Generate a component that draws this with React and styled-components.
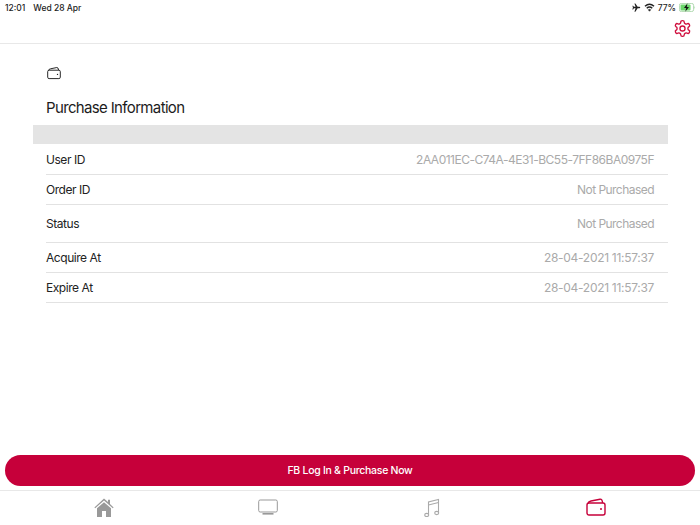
import React from 'react';
import styled, { createGlobalStyle } from 'styled-components';

const Global = createGlobalStyle`
  html, body { margin: 0; padding: 0; background: #fff; }
  body { font-family: Inter, "Liberation Sans", sans-serif; }
`;

const Page = styled.div`
  width: 700px;
  height: 525px;
  display: flex;
  flex-direction: column;
  overflow: hidden;
  background: #fff;
`;

const StatusBar = styled.div`
  height: 14px;
  padding: 1px 4px 0 5px;
  box-sizing: border-box;
  display: flex;
  align-items: center;
  justify-content: space-between;
  font-size: 8.5px;
  font-weight: 500;
  color: #222;
`;

const StatusGroup = styled.div`
  display: flex;
  align-items: center;
  gap: ${p => p.$gap || 4}px;
`;

const Header = styled.div`
  height: 24px;
  padding: 5px 8px 0;
  display: flex;
  justify-content: flex-end;
  align-items: flex-start;
  border-bottom: 1px solid #e8e8e8;
`;

const Content = styled.div`
  flex: 1;
  padding: 20px 32px 0 33px;
  display: flex;
  flex-direction: column;
`;

const WalletSlot = styled.div`
  height: 14px;
  padding-left: 14px;
  color: #222;
`;

const Title = styled.h1`
  margin: 19px 0 0 13px;
  height: 28px;
  font-size: 15px;
  line-height: 22px;
  font-weight: 400;
  letter-spacing: -0.65px;
  color: #1c1c1c;
`;

const GreyBar = styled.div`
  height: 19px;
  background: #e4e4e4;
`;

const Rows = styled.div`
  margin-left: 13px;
`;

const Row = styled.div`
  box-sizing: border-box;
  height: ${p => p.$h}px;
  padding: 0 14px 0 0;
  display: flex;
  align-items: center;
  justify-content: space-between;
  border-bottom: 1px solid #e2e2e2;
  font-size: 12px;
`;

const Label = styled.span`
  color: #222;
  letter-spacing: -0.45px;
`;

const Value = styled.span`
  color: #aaa;
  letter-spacing: ${p => p.$spacing}px;
`;

const BuyButton = styled.button`
  display: block;
  margin: 0 5px 4px;
  width: 690px;
  height: 31px;
  padding: 0;
  border: 0;
  border-radius: 16px;
  background: #c6003a;
  color: #fff;
  font-family: inherit;
  font-size: 10.5px;
  font-weight: 500;
  letter-spacing: -0.28px;
`;

const TabBar = styled.div`
  height: 34px;
  border-top: 1px solid #e8e8e8;
  display: grid;
  grid-template-columns: repeat(4, 164px);
  padding-left: 22px;
`;

const Tab = styled.div`
  display: flex;
  justify-content: center;
  padding-top: 6px;
  color: ${p => (p.$active ? '#c6003a' : '#999')};
`;

const Wallet = ({ size = 14 }) => (
  <svg width={size} height={size} viewBox="0 0 20 20" fill="none" stroke="currentColor" strokeWidth="1.4">
    <rect x="1" y="6" width="18" height="12" rx="2" />
    <path d="M2 6.5 Q2.5 4.5 5 4 L14 2.2 Q16.2 1.8 16.6 6" />
    <circle cx="15" cy="12" r="1" fill="currentColor" stroke="none" />
  </svg>
);

const Gear = () => (
  <svg width="19" height="19" viewBox="0 0 24 24" fill="none" stroke="#d0103f" strokeWidth="1.7" strokeLinejoin="round">
    <path d="M12.22 2h-.44a2 2 0 0 0-2 2v.18a2 2 0 0 1-1 1.73l-.43.25a2 2 0 0 1-2 0l-.15-.08a2 2 0 0 0-2.73.73l-.22.38a2 2 0 0 0 .73 2.73l.15.1a2 2 0 0 1 1 1.72v.51a2 2 0 0 1-1 1.74l-.15.09a2 2 0 0 0-.73 2.73l.22.38a2 2 0 0 0 2.73.73l.15-.08a2 2 0 0 1 2 0l.43.25a2 2 0 0 1 1 1.73V20a2 2 0 0 0 2 2h.44a2 2 0 0 0 2-2v-.18a2 2 0 0 1 1-1.73l.43-.25a2 2 0 0 1 2 0l.15.08a2 2 0 0 0 2.73-.73l.22-.39a2 2 0 0 0-.73-2.73l-.15-.08a2 2 0 0 1-1-1.74v-.5a2 2 0 0 1 1-1.74l.15-.09a2 2 0 0 0 .73-2.73l-.22-.38a2 2 0 0 0-2.73-.73l-.15.08a2 2 0 0 1-2 0l-.43-.25a2 2 0 0 1-1-1.73V4a2 2 0 0 0-2-2z" />
    <circle cx="12" cy="12" r="3.2" />
  </svg>
);

const Home = () => (
  <svg width="20" height="20" viewBox="0 0 20 20" fill="currentColor">
    <path d="M10 1.5 L14 5 V2.8 H16 V7 L19.6 10.4 L18.8 11.3 L10 3.5 L1.2 11.3 L0.4 10.4 Z" />
    <path d="M10 5.2 L17 11.2 V20 H12 V14 H8 V20 H3 V11.2 Z" />
  </svg>
);

const Tv = () => (
  <svg width="20" height="20" viewBox="0 0 20 20" fill="none" stroke="currentColor">
    <rect x="0.7" y="3" width="18.6" height="12" rx="1.5" strokeWidth="1" />
    <rect x="4.5" y="16" width="11" height="1.6" fill="currentColor" stroke="none" />
  </svg>
);

const Music = () => (
  <svg width="20" height="20" viewBox="0 0 20 20" fill="none" stroke="#aaa" strokeWidth="1.1">
    <path d="M6.5 17.5 V5 L16.5 2.5 V15.5" />
    <path d="M6.5 8 L16.5 5.5" />
    <ellipse cx="4.7" cy="18" rx="2" ry="1.6" />
    <ellipse cx="14.7" cy="16" rx="2" ry="1.6" />
  </svg>
);

const Plane = () => (
  <svg width="9" height="9" viewBox="0 0 24 24" fill="#222">
    <path d="M22 12 C22 10.5 20.5 10 19 10 H15 L9 1 H6.5 L9.5 10 H5 L3 7 H1 L2.5 12 L1 17 H3 L5 14 H9.5 L6.5 23 H9 L15 14 H19 C20.5 14 22 13.5 22 12 Z" />
  </svg>
);

const Wifi = () => (
  <svg width="11" height="9" viewBox="0 0 22 18" fill="none" stroke="#222" strokeWidth="3">
    <path d="M2 6.5 Q11 -1.5 20 6.5" />
    <path d="M5.5 10.5 Q11 5.5 16.5 10.5" />
    <path d="M11 16.5 L8.5 13.5 Q11 11.5 13.5 13.5 Z" fill="#222" strokeWidth="1" />
  </svg>
);

const Battery = () => (
  <svg width="17" height="9" viewBox="0 0 34 18">
    <rect x="0.8" y="0.8" width="28.4" height="16.4" rx="4" fill="none" stroke="#9ccf9c" strokeWidth="1.6" />
    <rect x="3" y="3" width="20" height="12" rx="2" fill="#6ad66a" />
    <path d="M31 6 Q33.5 9 31 12 Z" fill="#9ccf9c" />
    <path d="M17 0.5 L10 10 H14.5 L12.5 17.5 L20 8 H15.5 Z" fill="#111" />
  </svg>
);

const rows = [
  { label: 'User ID', value: '2AA011EC-C74A-4E31-BC55-7FF86BA0975F', h: 31, spacing: -0.5 },
  { label: 'Order ID', value: 'Not Purchased', h: 30, spacing: -0.54 },
  { label: 'Status', value: 'Not Purchased', h: 38, spacing: -0.54 },
  { label: 'Acquire At', value: '28-04-2021 11:57:37', h: 30, spacing: -0.3 },
  { label: 'Expire At', value: '28-04-2021 11:57:37', h: 30, spacing: -0.3 },
];

export default function App() {
  return (
    <Page>
      <Global />
      <StatusBar>
        <StatusGroup $gap={8}>
          <span>12:01</span>
          <span>Wed 28 Apr</span>
        </StatusGroup>
        <StatusGroup $gap={3}>
          <Plane />
          <Wifi />
          <span>77%</span>
          <Battery />
        </StatusGroup>
      </StatusBar>
      <Header>
        <Gear />
      </Header>
      <Content>
        <WalletSlot>
          <Wallet />
        </WalletSlot>
        <Title>Purchase Information</Title>
        <GreyBar />
        <Rows>
          {rows.map(r => (
            <Row key={r.label} $h={r.h}>
              <Label>{r.label}</Label>
              <Value $spacing={r.spacing}>{r.value}</Value>
            </Row>
          ))}
        </Rows>
      </Content>
      <BuyButton>FB Log In &amp; Purchase Now</BuyButton>
      <TabBar>
        <Tab><Home /></Tab>
        <Tab><Tv /></Tab>
        <Tab><Music /></Tab>
        <Tab $active><Wallet size={20} /></Tab>
      </TabBar>
    </Page>
  );
}
